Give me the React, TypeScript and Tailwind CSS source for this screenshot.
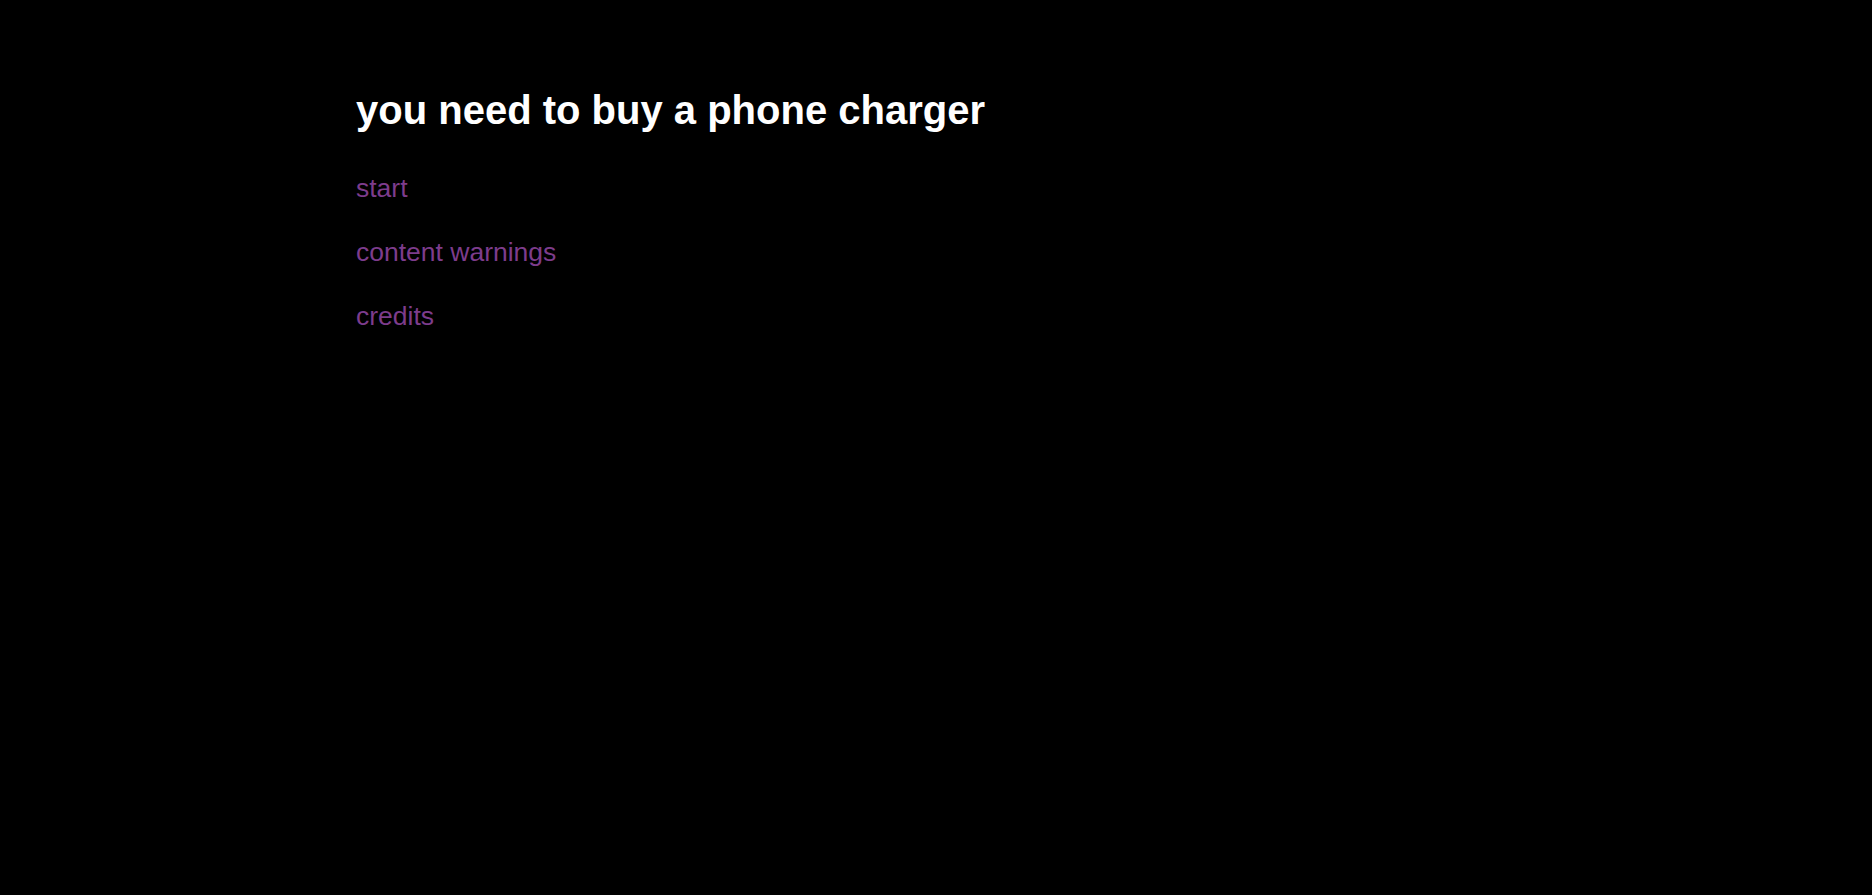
// Title screen: heading plus a short list of menu links
const LINKS = ['start', 'content warnings', 'credits']

export default function App() {
  return (
    <div className="min-h-[895px] bg-black font-['Liberation_Sans',Arial,sans-serif]">
      <div className="mx-auto max-w-[1160px] pt-[87px]">
        <h1 className="text-[40px] leading-[46px] font-bold text-white">
          you need to buy a phone charger
        </h1>

        <nav className="mt-[40px] flex flex-col gap-[34px]">
          {LINKS.map(l => (
            <a key={l} href="#" className="self-start text-[26.5px] leading-[30px] text-[#7d3c8c]">
              {l}
            </a>
          ))}
        </nav>
      </div>
    </div>
  )
}
